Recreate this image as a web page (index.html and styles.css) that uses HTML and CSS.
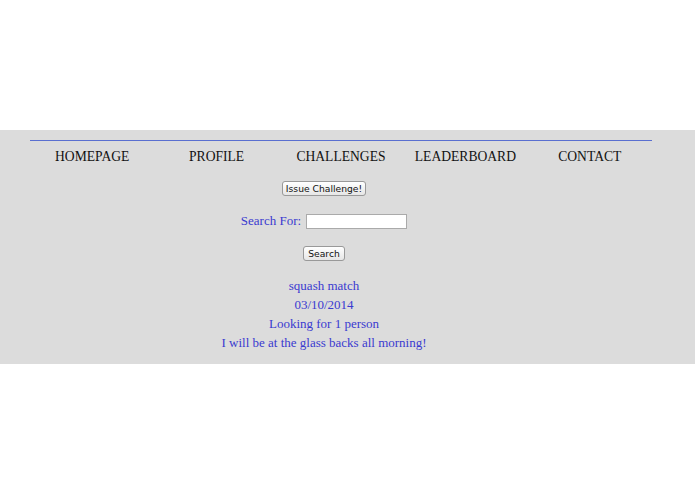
FILE: index.html
```html
<!DOCTYPE html>
<html>
<head>
<meta charset="utf-8">
<link rel="stylesheet" href="styles.css">
</head>
<body>
<div class="top"></div>
<div class="band">
  <div class="rule"></div>
  <nav class="nav">
    <a>HOMEPAGE</a>
    <a>PROFILE</a>
    <a>CHALLENGES</a>
    <a>LEADERBOARD</a>
    <a>CONTACT</a>
  </nav>
  <div class="content">
    <div class="row issue"><button class="btn">Issue Challenge!</button></div>
    <div class="row search"><label>Search For:</label><input class="field" type="text"></div>
    <div class="row go"><button class="btn small">Search</button></div>
    <div class="posts">
      <div>squash match</div>
      <div>03/10/2014</div>
      <div>Looking for 1 person</div>
      <div>I will be at the glass backs all morning!</div>
    </div>
  </div>
</div>
</body>
</html>
```
FILE: styles.css
```css
html, body { margin: 0; padding: 0; background: #fff; }
body { font-family: "Liberation Serif", "DejaVu Serif", serif; }
.top { height: 130px; }
.band { background: #dcdcdc; height: 234px; box-sizing: border-box; padding-top: 10px; }
.rule { margin: 0 43px 0 30px; height: 1px; background: #5a6fd0; }
.nav { display: grid; grid-template-columns: repeat(5, 1fr); margin: 0 43px 0 30px; padding-top: 7px; }
.nav a { text-align: center; font-size: 13.6px; color: #111; line-height: 18px; }
.content { width: 648px; }
.row { display: flex; justify-content: center; align-items: center; }
.btn { font-family: "DejaVu Sans", "Liberation Sans", sans-serif; font-size: 9.2px; color: #111; background: linear-gradient(#fff, #e6e6e6); border: 1px solid #999; border-radius: 3px; padding: 0 3px; height: 15px; line-height: 13px; }
.btn.small { padding: 0 4px; }
.issue { margin-top: 15px; }
.search { margin-top: 17px; color: #3a3ad0; font-size: 13px; height: 16px; }
.search label { margin-right: 5px; }
.field { width: 101px; height: 15px; box-sizing: border-box; border: 1px solid #aaa; background: #fff; padding: 0; }
.go { margin-top: 17px; }
.posts { margin-top: 15px; text-align: center; color: #3a3ad0; font-size: 13px; line-height: 19px; }
```
